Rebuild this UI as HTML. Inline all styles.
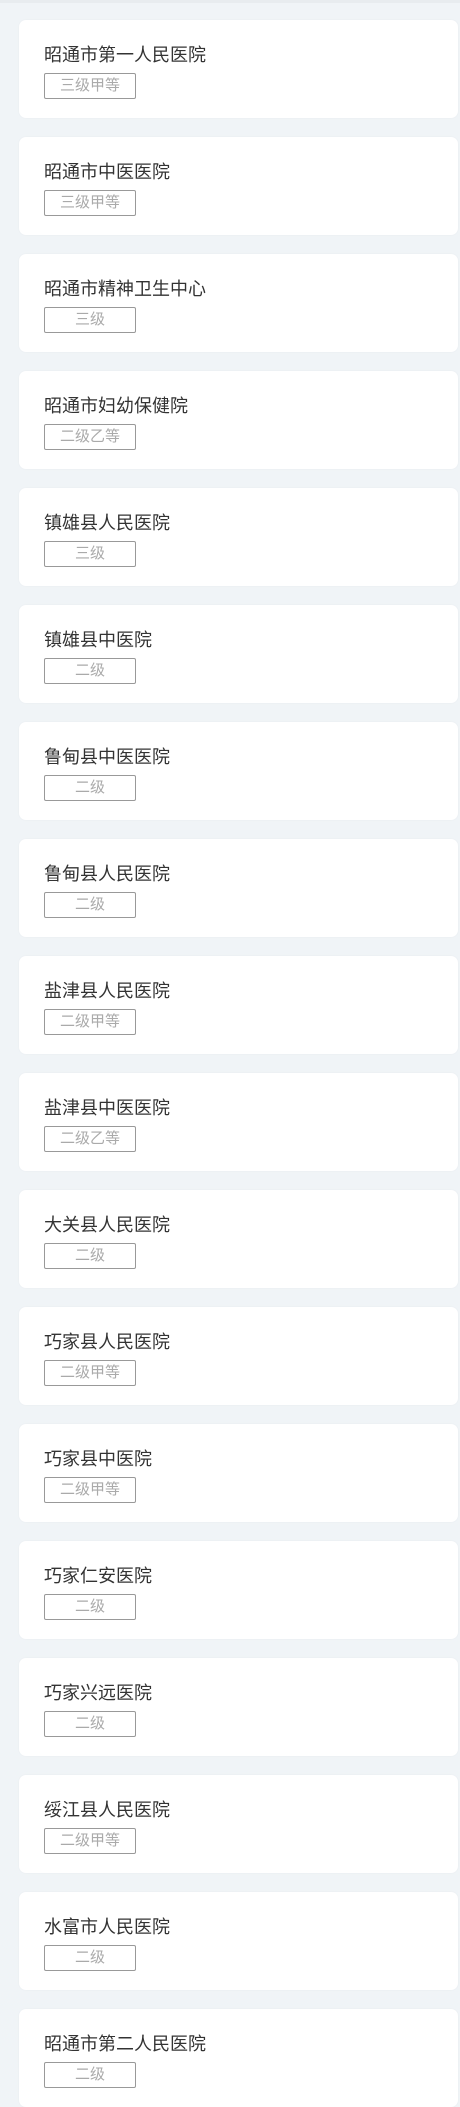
<!DOCTYPE html>
<html><head><meta charset="utf-8"><style>
html,body{margin:0;padding:0;}
body{width:460px;height:2048px;overflow:hidden;background:#f0f4f7;font-family:"Liberation Sans","Noto Sans CJK SC",sans-serif;position:relative;}
.top{position:absolute;left:0;top:0;width:460px;height:3px;background:#e8ecef;}
.c{position:absolute;left:19px;width:439px;height:98px;background:#fff;border-radius:7px;box-shadow:0 0 2px rgba(0,0,0,0.04);}
.t{position:absolute;left:25px;top:24px;font-size:18px;line-height:22px;color:#333;white-space:nowrap;}
.g{position:absolute;left:25px;top:53px;width:90px;height:24px;border:1px solid #999;border-radius:2px;box-sizing:content-box;color:#aaa;font-size:15px;line-height:24px;text-align:center;}
</style></head><body>
<div class="top"></div>
<div class="c" style="top:20px"><div class="t">昭通市第一人民医院</div><div class="g">三级甲等</div></div>
<div class="c" style="top:137px"><div class="t">昭通市中医医院</div><div class="g">三级甲等</div></div>
<div class="c" style="top:254px"><div class="t">昭通市精神卫生中心</div><div class="g">三级</div></div>
<div class="c" style="top:371px"><div class="t">昭通市妇幼保健院</div><div class="g">二级乙等</div></div>
<div class="c" style="top:488px"><div class="t">镇雄县人民医院</div><div class="g">三级</div></div>
<div class="c" style="top:605px"><div class="t">镇雄县中医院</div><div class="g">二级</div></div>
<div class="c" style="top:722px"><div class="t">鲁甸县中医医院</div><div class="g">二级</div></div>
<div class="c" style="top:839px"><div class="t">鲁甸县人民医院</div><div class="g">二级</div></div>
<div class="c" style="top:956px"><div class="t">盐津县人民医院</div><div class="g">二级甲等</div></div>
<div class="c" style="top:1073px"><div class="t">盐津县中医医院</div><div class="g">二级乙等</div></div>
<div class="c" style="top:1190px"><div class="t">大关县人民医院</div><div class="g">二级</div></div>
<div class="c" style="top:1307px"><div class="t">巧家县人民医院</div><div class="g">二级甲等</div></div>
<div class="c" style="top:1424px"><div class="t">巧家县中医院</div><div class="g">二级甲等</div></div>
<div class="c" style="top:1541px"><div class="t">巧家仁安医院</div><div class="g">二级</div></div>
<div class="c" style="top:1658px"><div class="t">巧家兴远医院</div><div class="g">二级</div></div>
<div class="c" style="top:1775px"><div class="t">绥江县人民医院</div><div class="g">二级甲等</div></div>
<div class="c" style="top:1892px"><div class="t">水富市人民医院</div><div class="g">二级</div></div>
<div class="c" style="top:2009px"><div class="t">昭通市第二人民医院</div><div class="g">二级</div></div>
</body></html>
